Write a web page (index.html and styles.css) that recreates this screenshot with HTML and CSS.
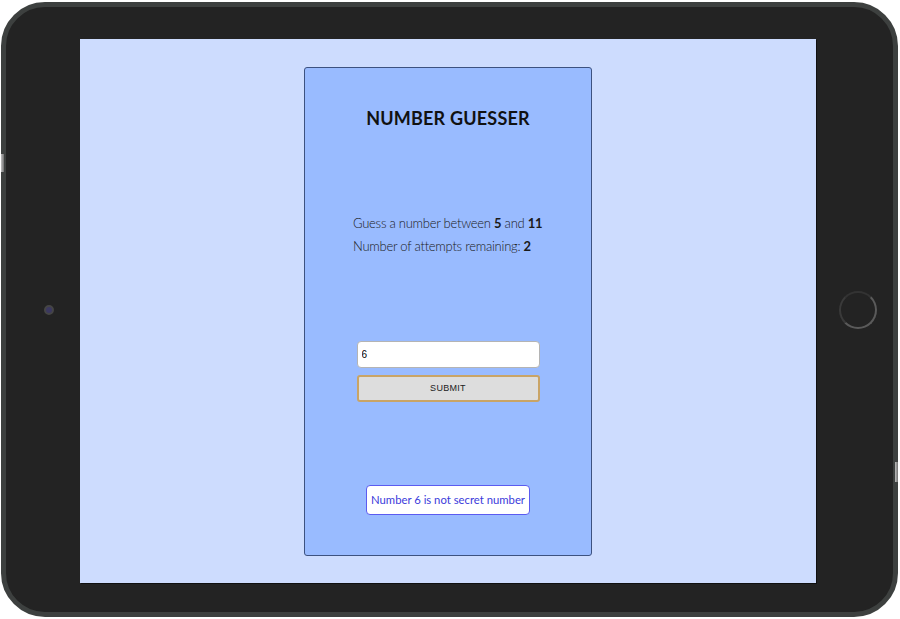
FILE: index.html
```html
<!DOCTYPE html>
<html>
<head>
<meta charset="utf-8">
<link rel="stylesheet" href="styles.css">
</head>
<body>
<div class="device">
  <span class="side-btn side-left"></span>
  <span class="side-btn side-right"></span>
  <span class="camera"></span>
  <span class="home"></span>
  <div class="screen">
    <div class="card">
      <h1 class="title">NUMBER GUESSER</h1>
      <div class="info">
        <p>Guess a number between <b>5</b> and <b>11</b></p>
        <p>Number of attempts remaining: <b>2</b></p>
      </div>
      <form class="guess-form">
        <input class="guess-input" type="text" value="6">
        <button class="submit" type="button">SUBMIT</button>
      </form>
      <div class="message">Number 6 is not secret number</div>
    </div>
  </div>
</div>
</body>
</html>
```
FILE: styles.css
```css
html, body {
  margin: 0;
  padding: 0;
  background: #ffffff;
  width: 900px;
  height: 619px;
  overflow: hidden;
}

.device {
  position: relative;
  margin: 2px 0 0 1px;
  width: 897px;
  height: 615px;
  box-sizing: border-box;
  background: #232323;
  border: 5px solid #3d403f;
  border-radius: 44px;
  padding: 32px 77px 29px 74px;
  display: flex;
}

.side-btn {
  position: absolute;
  width: 3px;
  background: linear-gradient(90deg, #bdbdbd, #6f6f6f);
}
.side-left { left: -5px; top: 147px; height: 18px; }
.side-right { right: -5px; top: 455px; height: 20px; }

.camera {
  position: absolute;
  left: 38px;
  top: 298px;
  width: 6px;
  height: 6px;
  border-radius: 50%;
  background: #3b3860;
  border: 2px solid #454545;
}

.home {
  position: absolute;
  left: 833px;
  top: 284px;
  width: 34px;
  height: 34px;
  border-radius: 50%;
  border: 2px solid #5a5a5a;
  border-top-color: #333;
  border-left-color: #3a3a3a;
}

.screen {
  flex: 1;
  background: #cddcfe;
  display: flex;
  align-items: center;
  justify-content: center;
  box-shadow: 1px 1px 0 #101010;
}

.card {
  width: 288px;
  height: 489px;
  box-sizing: border-box;
  background: #99bbff;
  border: 1px solid #3d5280;
  border-radius: 3px;
  display: flex;
  flex-direction: column;
  align-items: center;
  font-family: Lato, "Liberation Sans", sans-serif;
}

.title {
  margin: 39px 0 0;
  font-size: 18px;
  font-weight: 700;
  color: #111;
  letter-spacing: 0.2px;
  line-height: 22px;
}

.info {
  margin-top: 86px;
  width: 190px;
  font-weight: 300;
  font-size: 13px;
  letter-spacing: -0.25px;
  color: #1a1a1a;
  white-space: nowrap;
}
.info p {
  margin: 0 0 6px;
  line-height: 17px;
}
.info b {
  font-weight: 700;
}

.guess-form {
  margin-top: 80px;
  display: flex;
  flex-direction: column;
  gap: 7px;
  width: 183px;
}

.guess-input {
  height: 27px;
  box-sizing: border-box;
  border: 1px solid #b4b4b4;
  border-radius: 4px;
  background: #fff;
  font-family: "Liberation Sans", Arial, sans-serif;
  font-size: 10px;
  padding: 0 4px;
  color: #000;
}

.submit {
  height: 27px;
  box-sizing: border-box;
  border: 2px solid #c9a466;
  border-radius: 3px;
  background: #dddddd;
  font-family: "Liberation Sans", Arial, sans-serif;
  font-size: 9px;
  color: #222;
  letter-spacing: 0.3px;
}

.message {
  margin-top: 83px;
  background: #fff;
  border: 1px solid #5b5bf0;
  border-radius: 4px;
  color: #3b3bdb;
  font-size: 11.3px;
  padding: 7px 4px;
  line-height: 14px;
}
```
